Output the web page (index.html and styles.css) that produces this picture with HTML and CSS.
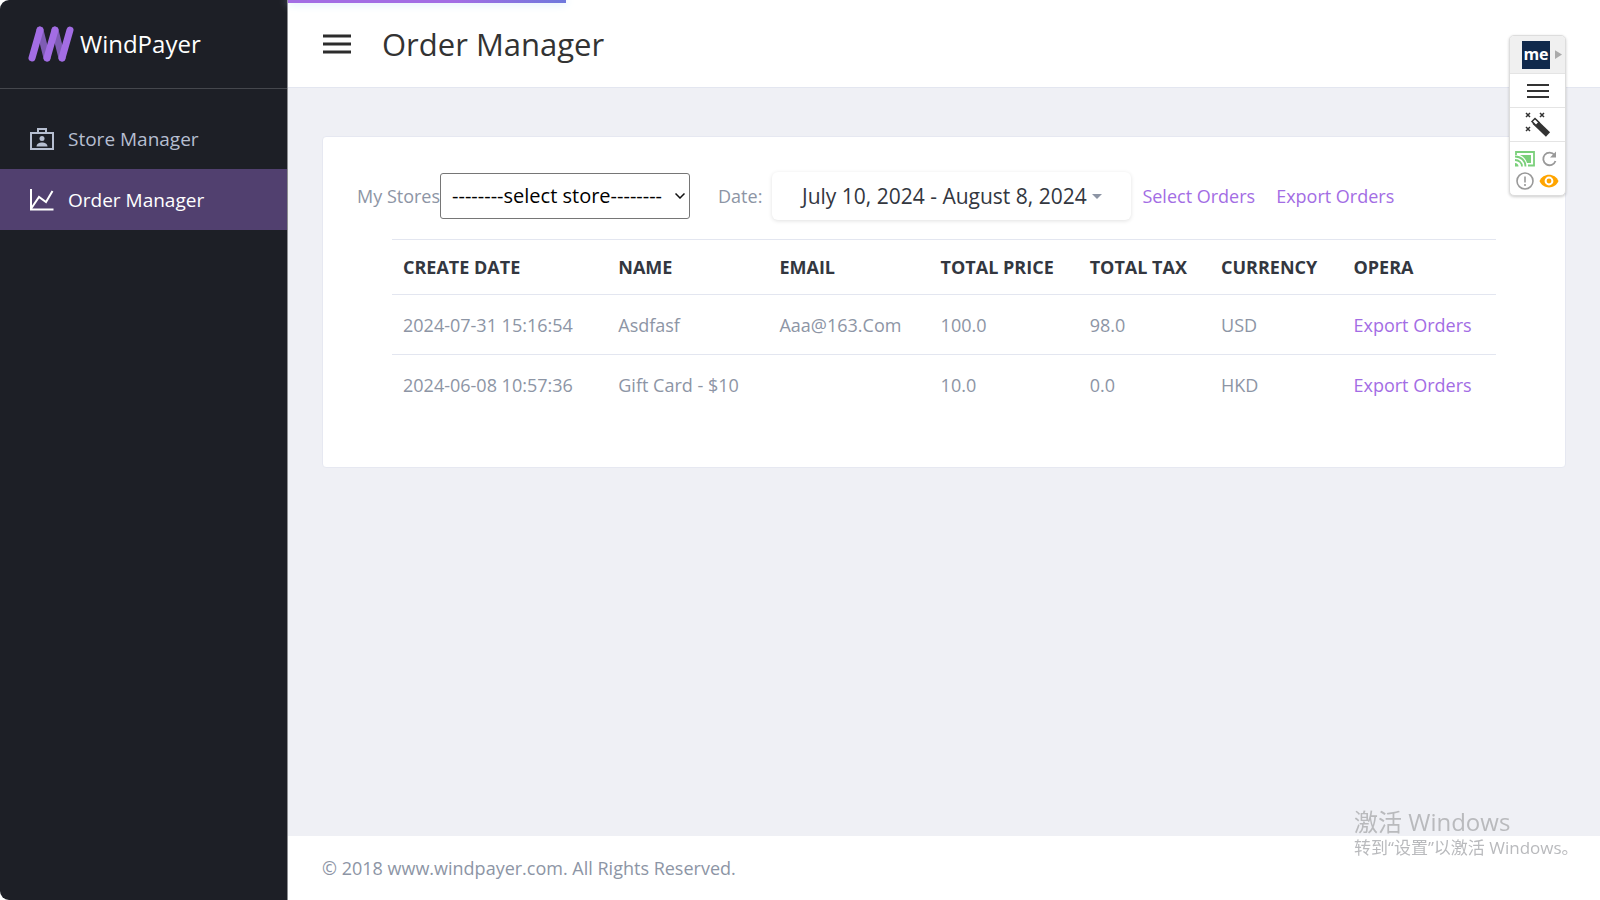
FILE: index.html
```html
<!DOCTYPE html>
<html lang="en">
<head>
<meta charset="utf-8">
<title>Order Manager</title>
<link rel="stylesheet" href="styles.css">
</head>
<body>
<div class="app">
  <aside class="sidebar">
    <a class="brand" href="#">
      <svg class="brand-logo" viewBox="0 0 46 36" fill="none" stroke-linecap="round" stroke-width="7">
        <g stroke="#7e5cb4"><path d="M12 4l7 28M27 4l7 28"/></g>
        <g stroke="#a36de4"><path d="M12 4L4 32M27 4l-8 28M42 4l-8 28"/></g>
      </svg>
      <span>WindPayer</span>
    </a>
    <nav class="menu">
      <a class="menu-item" href="#">
        <svg class="menu-icon" viewBox="0 0 24 24" fill="none" stroke="currentColor" stroke-width="2">
          <path d="M1 6h22v16H1zM8 6V2h8v4"/>
          <circle cx="12" cy="11.500" r="2.500" fill="currentColor" stroke="none"/>
          <path d="M6.500 19.500c0-5.500 11-5.500 11 0z" fill="currentColor" stroke="none"/>
        </svg>
        <span>Store Manager</span>
      </a>
      <a class="menu-item active" href="#" aria-current="page">
        <svg class="menu-icon" viewBox="0 0 24 24" fill="none" stroke="currentColor" stroke-width="2">
          <path d="M1 1v20.500h22.500M1.500 20L9 9l7 5 6.500-11"/>
        </svg>
        <span>Order Manager</span>
      </a>
    </nav>
  </aside>

  <div class="page">
    <div class="progress"></div>
    <header class="topbar">
      <button class="icon-button" type="button" aria-label="Toggle menu">
        <svg class="burger" viewBox="0 0 28 20" stroke="#2c2c2c" stroke-width="3"><path d="M0 2h28M0 10h28M0 18h28"/></svg>
      </button>
      <h1 class="title">Order Manager</h1>
    </header>

    <main class="content">
      <section class="card">
        <form class="filters">
          <label for="store">My Stores</label>
          <span class="select-box">
            <select id="store" class="select"><option>--------select store--------</option></select>
            <svg class="chevron" viewBox="0 0 10 6" fill="none" stroke="#111" stroke-width="1.500"><path d="M0.500 0.500L5 5l4.500-4.500"/></svg>
          </span>
          <label class="date-label" for="date">Date:</label>
          <button id="date" class="date-button" type="button">July 10, 2024 - August 8, 2024<span class="caret"></span></button>
          <a class="link" href="#">Select Orders</a>
          <a class="link" href="#">Export Orders</a>
        </form>
        <div class="table-wrap">
          <table class="orders">
            <colgroup>
              <col class="col-date"><col class="col-name"><col class="col-email"><col class="col-price"><col class="col-tax"><col class="col-currency"><col class="col-action">
            </colgroup>
            <thead>
              <tr><th>CREATE DATE</th><th>NAME</th><th>EMAIL</th><th>TOTAL PRICE</th><th>TOTAL TAX</th><th>CURRENCY</th><th>OPERA</th></tr>
            </thead>
            <tbody>
              <tr><td>2024-07-31 15:16:54</td><td>Asdfasf</td><td>Aaa@163.Com</td><td>100.0</td><td>98.0</td><td>USD</td><td><a class="link" href="#">Export Orders</a></td></tr>
              <tr><td>2024-06-08 10:57:36</td><td>Gift Card - $10</td><td></td><td>10.0</td><td>0.0</td><td>HKD</td><td><a class="link" href="#">Export Orders</a></td></tr>
            </tbody>
          </table>
        </div>
      </section>
    </main>

    <footer class="footer">© 2018 www.windpayer.com. All Rights Reserved.</footer>
  </div>
</div>

<div class="tools">
  <button class="tool tool-head" type="button" aria-label="Expand">
    <span class="me">me</span>
    <svg class="play" viewBox="0 0 8 10" fill="#aaa"><path d="M0 0l8 5-8 5z"/></svg>
  </button>
  <button class="tool" type="button" aria-label="Menu">
    <svg width="22" height="14" viewBox="0 0 22 14" stroke="#333" stroke-width="2"><path d="M0 1h22M0 7h22M0 13h22"/></svg>
  </button>
  <button class="tool" type="button" aria-label="Magic wand">
    <svg width="26" height="26" viewBox="0 0 26 26" fill="none">
      <path d="M9.500 9.500L23 22.500" stroke="#333" stroke-width="6"/>
      <path d="M7 9.500L10 6.500l4 4-3 3z" fill="#fff" stroke="#333" stroke-width="1.500"/>
      <path d="M1 1l4 4M5 1L1 5M15 1l4 4M19 1l-4 4M1 15l4 4M5 15l-4 4" stroke="#333" stroke-width="1.500"/>
    </svg>
  </button>
  <div class="tool-grid">
    <button type="button" class="mini" aria-label="Cast">
      <svg viewBox="0 0 20 18" fill="none" stroke="#7bd07b" stroke-width="1.800"><path d="M1 5V2h18v13.500h-6"/><path d="M5 5h11v8h-4C11 9 8 6.500 5 5z" fill="#7bd07b" stroke="none"/><path d="M0 6.500c6 0 10.500 4 10.500 10M0 10c4 0 7 3 7 6.500"/><path d="M0 13c2 0 3.500 1.500 3.500 3.500H0z" fill="#7bd07b" stroke="none"/></svg>
    </button>
    <button type="button" class="mini" aria-label="Reload">
      <svg viewBox="0 0 20 18" fill="none" stroke="#999" stroke-width="1.800"><path d="M15.500 5a6.300 6.300 0 1 0 1 6"/><path d="M17 1.500v6h-6z" fill="#999" stroke="none"/></svg>
    </button>
    <button type="button" class="mini" aria-label="Alerts">
      <svg viewBox="0 0 20 18" fill="none" stroke="#999" stroke-width="1.600"><circle cx="10" cy="9" r="8"/><path d="M10 4.500v6M10 12v2"/></svg>
    </button>
    <button type="button" class="mini" aria-label="Visibility">
      <svg viewBox="0 0 20 18"><path d="M0.500 9C4 .5 16 .5 19.500 9 16 17.500 4 17.500.5 9z" fill="#ffa500"/><circle cx="10" cy="9" r="3.400" fill="#ffa500" stroke="#fff" stroke-width="2"/></svg>
    </button>
  </div>
</div>

<div class="watermark" lang="zh-CN">
  <div class="watermark-title">激活 Windows</div>
  <div class="watermark-text">转到“设置”以激活 Windows。</div>
</div>
</body>
</html>
```
FILE: styles.css
```css
* { box-sizing: border-box; }

body {
  margin: 0;
  background: #fff;
  color: #8d95a5;
  font: 18px/24px "Open Sans", "Noto Sans", "Noto Sans CJK SC", sans-serif;
}

a { text-decoration: none; }
button { font: inherit; border: 0; padding: 0; background: none; cursor: pointer; }
svg { display: block; flex: none; }

.app { display: flex; min-height: 100vh; }

.sidebar {
  flex: none;
  width: 288px;
  background: #1d1f26;
  border-right: 1px solid #8c8d91;
  border-radius: 9px 0 0 9px;
}
.brand {
  display: flex;
  align-items: center;
  gap: 6px;
  height: 89px;
  padding-left: 28px;
  border-bottom: 1px solid #45474d;
  color: #fff;
  font-size: 24px;
}
.brand-logo { width: 46px; height: 36px; }
.menu { padding-top: 19px; }
.menu-item {
  display: flex;
  align-items: center;
  gap: 14px;
  height: 61px;
  padding-left: 30px;
  color: #b6bed0;
  font-size: 19px;
}
.menu-item.active { background: #51406f; color: #fff; }
.menu-icon { width: 24px; height: 24px; }

.page {
  position: relative;
  flex: 1;
  display: flex;
  flex-direction: column;
  min-width: 0;
}
.progress {
  position: absolute;
  top: 0;
  left: 0;
  width: 278px;
  height: 3px;
  background: linear-gradient(90deg, #a36de4 60%, #6f78dc);
  box-shadow: 0 0 10px #b9dcfb;
}
.topbar {
  display: flex;
  align-items: center;
  gap: 31px;
  height: 88px;
  padding: 0 35px;
  border-bottom: 1px solid #e3e6f0;
}
.burger { width: 28px; height: 20px; }
.title { margin: 0; color: #333; font-size: 31px; line-height: 40px; font-weight: 400; }

.content { flex: 1; padding: 48px 34px; background: #eff0f5; }
.card {
  padding: 35px 34px 52px;
  background: #fff;
  border: 1px solid #e6e8f1;
  border-radius: 4px;
}
.filters { display: flex; align-items: center; white-space: nowrap; }
.select-box { position: relative; width: 250px; }
.select {
  display: block;
  width: 100%;
  height: 46px;
  padding: 0 11px;
  appearance: none;
  background: #fff;
  border: 1px solid #767676;
  border-radius: 3px;
  color: #000;
  font: inherit;
  font-size: 20px;
}
.chevron { position: absolute; right: 5px; top: 20px; width: 10px; height: 6px; pointer-events: none; }
.date-label { margin: 0 10px 0 28px; }
.date-button {
  display: flex;
  align-items: center;
  justify-content: center;
  gap: 5px;
  width: 359px;
  height: 48px;
  border-radius: 6px;
  box-shadow: 0 1px 4px rgba(0, 0, 0, 0.12);
  color: #33373f;
  font-size: 21px;
}
.caret { border: 5px solid transparent; border-top-color: #8d95a5; border-bottom: 0; }
.link { color: #a36de4; }
.filters .link { margin-left: 11px; }
.filters .link + .link { margin-left: 21px; }

.table-wrap { padding: 19px 35px 0; }
.orders { width: 100%; border-collapse: collapse; table-layout: fixed; white-space: nowrap; }
.orders th, .orders td { height: 60px; padding: 0 11px; border-top: 1px solid #e3e6f0; text-align: left; }
.orders th { height: 55px; color: #33373f; font-weight: 700; }
.col-date { width: 19.5%; }
.col-name, .col-email { width: 14.6%; }
.col-price { width: 13.5%; }
.col-tax { width: 11.9%; }
.col-currency { width: 12%; }

.footer { padding: 20px 34px; background: #fff; }

.tools {
  position: fixed;
  top: 35px;
  right: 34px;
  width: 57px;
  background: #fff;
  border: 1px solid #ddd;
  border-radius: 5px;
  box-shadow: 0 1px 3px rgba(0, 0, 0, 0.2);
  overflow: hidden;
}
.tool {
  display: flex;
  align-items: center;
  justify-content: center;
  width: 100%;
  height: 34px;
  border-bottom: 1px solid #e4e4e4;
}
.tool-head { justify-content: flex-end; gap: 5px; height: 38px; padding-right: 3px; background: #f0f0f0; }
.me {
  width: 28px;
  height: 28px;
  background: #10294b;
  color: #fff;
  font-size: 16px;
  font-weight: 700;
  line-height: 26px;
}
.play { width: 7px; height: 9px; }
.tool-grid { display: grid; grid-template-columns: 20px 20px; gap: 4px; justify-content: center; padding: 8px 2px 5px 0; }
.mini { width: 20px; height: 18px; }

.watermark {
  position: fixed;
  right: 23px;
  bottom: 40px;
  width: 223px;
  color: #b9babd;
  white-space: nowrap;
  pointer-events: none;
}
.watermark-title { font-size: 24px; line-height: 28px; }
.watermark-text { font-size: 17px; line-height: 24px; }
```
